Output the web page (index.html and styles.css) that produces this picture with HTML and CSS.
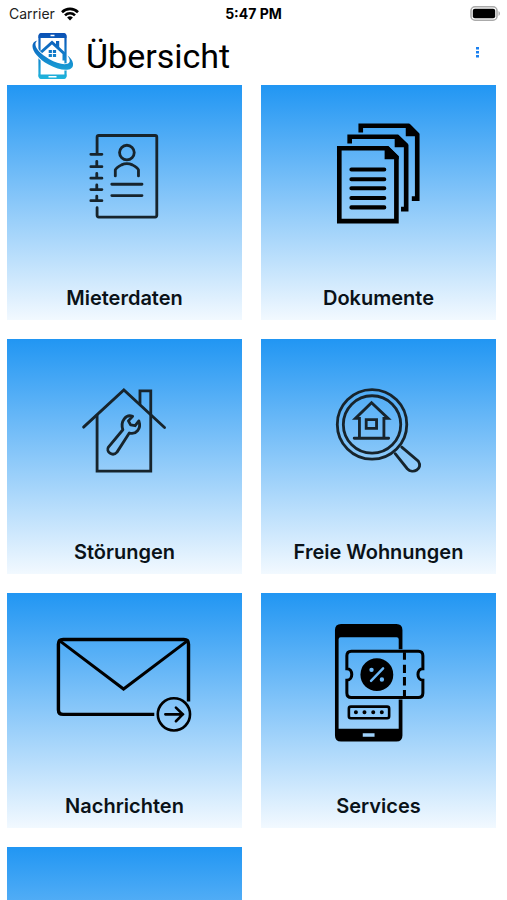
FILE: index.html
```html
<!DOCTYPE html>
<html lang="de">
<head>
  <meta charset="UTF-8">
  <meta name="viewport" content="width=device-width, initial-scale=1.0">
  <title>Übersicht</title>
  <link rel="stylesheet" href="styles.css">
</head>
<body>

  <div class="status-bar">
    <div class="carrier">
      <span>Carrier</span>
      <svg width="18" height="14" viewBox="0 0 18 14" fill="none" stroke="#000" stroke-width="2.6">
        <path d="M1 5.2a11.4 11.4 0 0 1 16 0"/>
        <path d="M4 8.3a7 7 0 0 1 10 0"/>
        <path d="M9 13.5L6.1 10.6a4.1 4.1 0 0 1 5.8 0z" fill="#000" stroke="none"/>
      </svg>
    </div>
    <div class="time">5:47 PM</div>
    <div class="battery">
      <svg width="31" height="16" viewBox="0 0 31 16">
        <rect x="1" y="0.8" width="26" height="13.400" rx="4" fill="#fff" stroke="#aaa" stroke-width="1.6"/>
        <rect x="2.800" y="2.700" width="22.400" height="9.600" rx="2" fill="#000"/>
        <path d="M28.5 5c2 1 2 4 0 5z" fill="#aaa"/>
      </svg>
    </div>
  </div>

  <header class="header">
    <svg class="logo" width="46" height="50" viewBox="0 0 46 50" fill="none">
      <defs>
        <linearGradient id="logo-color" gradientUnits="userSpaceOnUse" x1="0" y1="2" x2="0" y2="48">
          <stop offset="0" stop-color="#0b50b4"/>
          <stop offset="0.5" stop-color="#1180cb"/>
          <stop offset="1" stop-color="#20b5dc"/>
        </linearGradient>
      </defs>
      <rect x="9.500" y="3" width="26" height="44" rx="3" stroke="url(#logo-color)" stroke-width="2.200"/>
      <path d="M8.500 7V5a3 3 0 0 1 3-3h22a3 3 0 0 1 3 3v2z" fill="url(#logo-color)"/>
      <path d="M8.500 43.500h28v1.500a3 3 0 0 1-3 3H11.500a3 3 0 0 1-3-3z" fill="url(#logo-color)"/>
      <path d="M20.500 4.500h4M18.500 45.800h8" stroke="#fff" stroke-width="1.400"/>
      <path d="M8 24L22 11.500L34 22.500V29.500" stroke="url(#logo-color)" stroke-width="3"/>
      <path d="M26 10h3.200v8l-3.200-3z" fill="url(#logo-color)"/>
      <path d="M18.700 19h3.200v3h-3.200zM22.900 19h3.200v3h-3.200zM18.700 23h3.200v3h-3.200zM22.900 23h3.200v3h-3.200z" fill="url(#logo-color)"/>
      <path d="M7.500 9.500C-3 12 4 26 18.500 33.500C31 40.500 44 41 43 32.500C42.500 29 40 26.500 37.500 24.500C40 28 41 31.500 37.500 32.800C33 34 26 32 19 28C8 21.500 2 13.500 7.500 9.500z" fill="url(#logo-color)" stroke="#fff" stroke-width="1.600" paint-order="stroke"/>
    </svg>
    <h1 class="title">Übersicht</h1>
    <button class="menu" type="button" aria-label="Menü">
      <svg width="4" height="12" viewBox="0 0 4 12" fill="#1a80f0">
        <path d="M1 1h3v2.500H1zM1 5h3v2.500H1zM1 9h3v2.500H1z"/>
      </svg>
    </button>
  </header>

  <main class="tiles">
    <a class="tile" href="#mieterdaten">
      <svg class="icon" viewBox="0 0 161 130" fill="none" stroke="#17242c" stroke-width="2.8" stroke-linecap="round" stroke-linejoin="round">
        <path d="M53.700 44V28q0-1.700 1.700-1.700H111.300q1.700 0 1.700 1.700V105.600q0 1.700-1.700 1.700H55.400q-1.700 0-1.700-1.700V98"/>
        <path d="M47.500 45h11M47.500 57.300h11M47.500 68.700h11M47.500 80h11M47.500 91h11"/>
        <path d="M53.400 52v5M53.400 64v4M53.400 75.500v4M53.400 86.500v4"/>
        <circle cx="83.300" cy="43.300" r="7.300"/>
        <path d="M71.800 66.500V60.500Q72.500 58.500 78 55.500Q83.300 53 88.700 55.500Q94.200 58.500 94.800 60.500V66.500"/>
        <path d="M68.300 74.700h30M68.300 86h30"/>
      </svg>
      <span class="label">Mieterdaten</span>
    </a>

    <a class="tile" href="#dokumente">
      <svg class="icon" viewBox="0 0 161 130" fill="none" stroke="#000" stroke-width="4.600">
        <path d="M42 39H89.500L98.700 48V111.300H42z"/>
        <path d="M87 37V50H101V47L91 37z" fill="#000" stroke="none"/>
        <path d="M54 60h32.700M54 69.700h32.700M54 78.700h32.700M54 88.300h32.700M54 97.700h32.700" stroke-width="4" stroke-linecap="round"/>
        <path d="M52.300 34.300V27.600H99.500L108.400 36.500V99.400H103.300"/>
        <path d="M97 26V38H110V34.500L101 26z" fill="#000" stroke="none"/>
        <path d="M63.300 23.300V16.600H110.500L119.400 25.500V89H114"/>
        <path d="M108 15V27H121V24L112 15z" fill="#000" stroke="none"/>
      </svg>
      <span class="label">Dokumente</span>
    </a>

    <a class="tile" href="#stoerungen">
      <svg class="icon" viewBox="0 0 161 130" fill="none" stroke="#17242c" stroke-width="2.800" stroke-linecap="round" stroke-linejoin="miter">
        <path d="M40.300 63.700L80.300 26.700L120.700 64"/>
        <path d="M53.700 52V107.300H107V27.700H96.300V40.500"/>
        <path stroke-linejoin="round" d="M79.300 66.300L65 83.500C62 88 69 93.500 73.500 88.500L85.700 69.500C92 71.500 98 65.500 95.200 57.500L91.500 62.300L87 61.500L84.800 57.500L89 53C82.500 50.500 76.500 57.500 79.300 66.300z"/>
      </svg>
      <span class="label">Störungen</span>
    </a>

    <a class="tile" href="#wohnungen">
      <svg class="icon" viewBox="0 0 161 130" fill="none" stroke="#17242c" stroke-width="2.800" stroke-linecap="round">
        <circle cx="74.500" cy="61" r="34.500"/>
        <circle cx="74.500" cy="61" r="28.500"/>
        <path d="M97.500 90L109.500 105C115 111 125.500 105 120.500 97.500L104 83.500"/>
        <path d="M62 74V55H58L74 39.500L90.500 55H86.300V74M56.800 74.700H91"/>
        <path d="M68.700 56.300H79V65H68.700z"/>
      </svg>
      <span class="label">Freie Wohnungen</span>
    </a>

    <a class="tile" href="#nachrichten">
      <svg class="icon" viewBox="0 0 161 130" fill="none" stroke="#000" stroke-width="3.400">
        <path d="M144.500 84V27q0-4.700-4.700-4.700H20q-4.700 0-4.700 4.700V92q0 4.700 4.700 4.700H110.500"/>
        <path d="M17 24L80 71.500L143 24" stroke-width="3"/>
        <circle cx="130" cy="96.700" r="16" stroke-width="2.600"/>
        <path d="M121.500 96.700H139M132 90L138.800 96.700L132 103.500" stroke-width="2.600" stroke-linecap="round"/>
      </svg>
      <span class="label">Nachrichten</span>
    </a>

    <a class="tile" href="#services">
      <svg class="icon" viewBox="0 0 161 130" fill="none" stroke="#000" stroke-width="3">
        <path d="M104.700 32V13q0-6-6-6H43.700q-6 0-6 6V117.700q0 6 6 6H98.700q6 0 6-6V82H101V111H41.300V22q0-2 2-2H99q2 0 2 2V32zM65.300 115.500H77V119H65.300z" fill="#000" fill-rule="evenodd" stroke="none"/>
        <path d="M54 34H120.500q4.500 0 4.500 4.500V51.300C118.500 51.300 118.500 62.700 125 62.700V75.500q0 4.500-4.500 4.500H54q-4.500 0-4.500-4.500V62.700C56 62.700 56 51.300 49.500 51.300V38.500q0-4.500 4.500-4.500z"/>
        <path d="M106.700 35V42.500M106.700 47.500V55.500M106.700 59.500V68M106.700 72.500V79"/>
        <circle cx="79.300" cy="57.300" r="16.300" fill="#000" stroke="none"/>
        <path d="M85.500 51L73.500 63.500" stroke="#6bb8f8" stroke-width="2.400" stroke-linecap="round"/>
        <path d="M74 52.500h0M84.300 62h0" stroke="#6bb8f8" stroke-width="4.400" stroke-linecap="round"/>
        <rect x="51.500" y="89" width="40" height="11.500" rx="2" stroke-width="2.600"/>
        <path d="M58.500 94.700h0M67 94.700h0M75.700 94.700h0M84.200 94.700h0" stroke-width="4" stroke-linecap="round"/>
      </svg>
      <span class="label">Services</span>
    </a>

    <a class="tile" href="#mehr" aria-label="Mehr"></a>
  </main>

</body>
</html>
```
FILE: styles.css
```css
* {
  box-sizing: border-box;
}

body {
  margin: 0;
  height: 100vh;
  display: flex;
  flex-direction: column;
  font-family: Inter, 'Liberation Sans', sans-serif;
  background-color: #fff;
  color: #000;
}

.status-bar {
  display: grid;
  grid-template-columns: 1fr auto 1fr;
  align-items: center;
  padding: 4px 6px 0;
  font-size: 14px;
  line-height: 20px;
}

.carrier {
  display: flex;
  align-items: center;
  gap: 6px;
  padding-left: 3px;
  color: #222;
}

.time {
  font-weight: 700;
}

.battery {
  display: flex;
  justify-content: flex-end;
}

.header {
  display: flex;
  align-items: center;
  padding: 7px 24px 4px 30px;
}

.title {
  flex: 1;
  margin: 0 0 0 10px;
  font-family: Roboto, Inter, sans-serif;
  font-size: 34px;
  font-weight: 400;
  line-height: 50px;
}

.menu {
  display: flex;
  padding: 4px;
  margin-bottom: 8px;
  border: none;
  background: none;
  cursor: pointer;
}

.tiles {
  flex: 1;
  min-height: 0;
  display: grid;
  grid-template-columns: 1fr 1fr;
  align-content: start;
  gap: 19px;
  padding: 0 11px 19px 7px;
  overflow-y: auto;
  scrollbar-width: none;
}

.tile {
  aspect-ratio: 1;
  display: flex;
  flex-direction: column;
  align-items: center;
  justify-content: space-between;
  padding: 24px 0 8px;
  background: linear-gradient(#2196f3, #f2f9ff);
  color: #0a1218;
  text-decoration: none;
}

.icon {
  width: 69%;
}

.label {
  font-size: 20px;
  font-weight: 600;
  line-height: 28px;
}
```
